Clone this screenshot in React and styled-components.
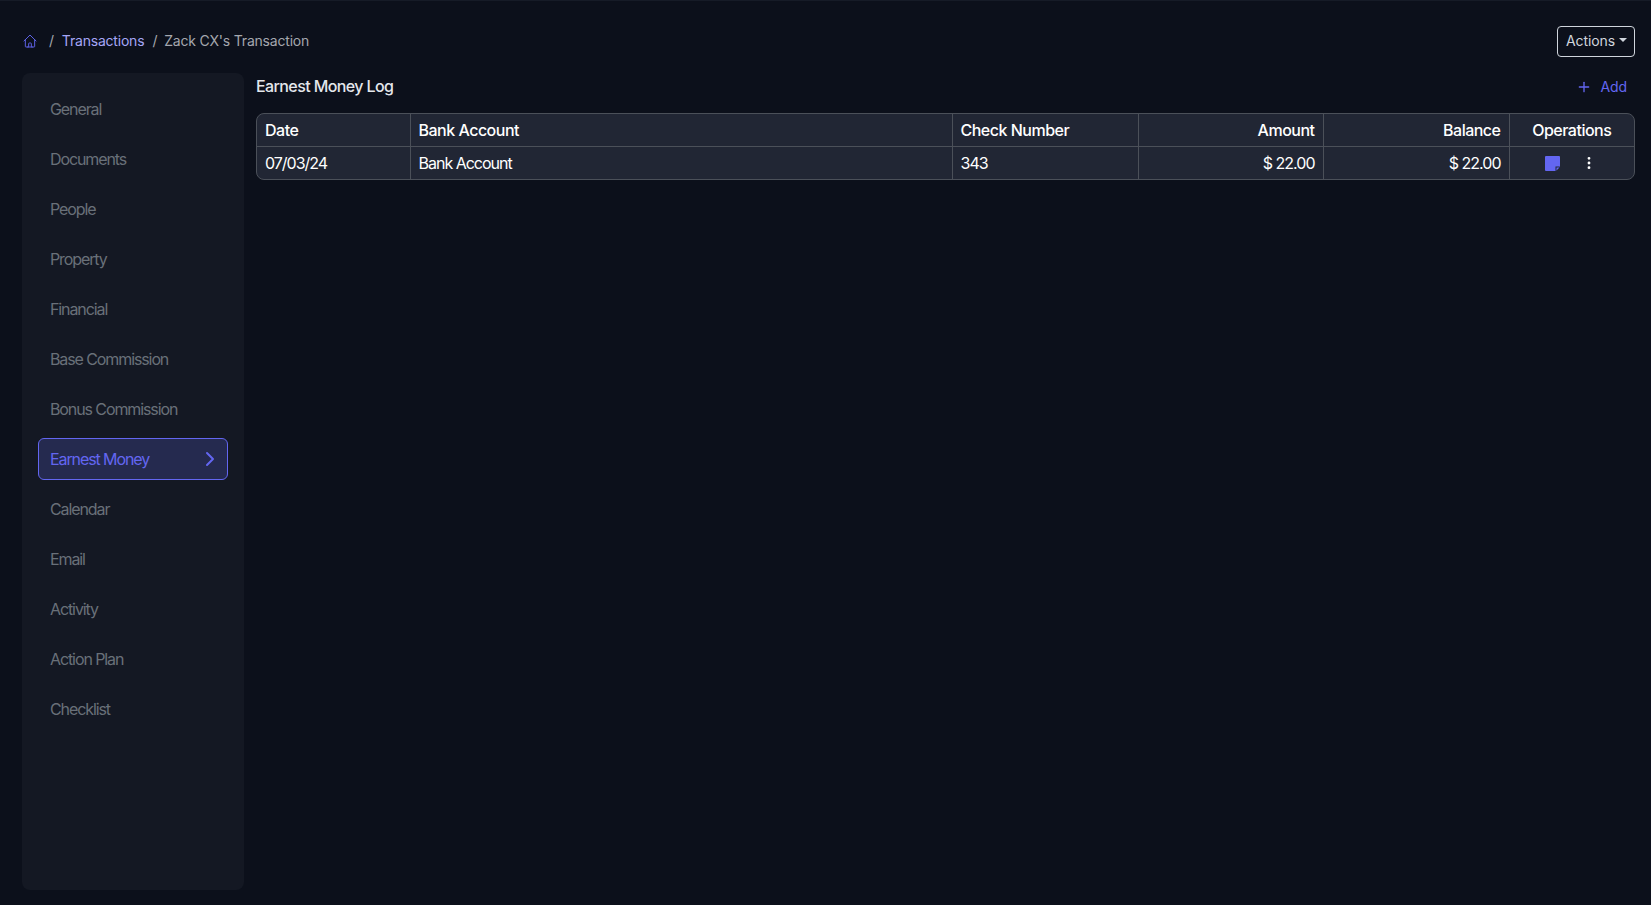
import React from "react";
import styled, { createGlobalStyle } from "styled-components";
import { ChevronRight, EllipsisVertical, Plus } from "lucide-react";
import { HiOutlineHome } from "react-icons/hi";

const GlobalStyle = createGlobalStyle`
  html, body {
    margin: 0;
    height: 100%;
    background: #0c101b;
    font-family: Inter, "Liberation Sans", sans-serif;
  }
  * {
    box-sizing: border-box;
  }
`;

const Page = styled.div`
  height: 905px;
  padding: 1px 16px 16px 22px;
  border-top: 1px solid #161b27;
  display: flex;
  flex-direction: column;
  overflow: hidden;
`;

const TopBar = styled.div`
  display: flex;
  align-items: center;
  justify-content: space-between;
  padding-top: 23px;
  height: 71px;
  padding-bottom: 16px;
`;

const Breadcrumb = styled.nav`
  display: flex;
  align-items: center;
  font-size: 14px;
  line-height: 20px;
  letter-spacing: -0.2px;
  color: #a4a7ae;
`;

const Crumb = styled.a`
  color: #a5a6f6;
  text-decoration: none;
`;

const Divider = styled.span`
  margin: 0 8px;
  color: #a4a7ae;
`;

const HomeLink = styled.a`
  display: flex;
  color: #6366f1;
  margin-right: 3px;
`;

const CurrentCrumb = styled.span`
  margin-left: -1px;
`;

const ActionsButton = styled.button`
  display: flex;
  align-items: center;
  height: 31px;
  width: 78px;
  padding: 0 8px;
  background: transparent;
  border: 1px solid #d0d5dd;
  border-radius: 4px;
  color: #d0d5dd;
  font: 400 14px/20px Inter, "Liberation Sans", sans-serif;
  letter-spacing: -0.1px;
`;

const Caret = styled.span`
  margin-left: 4px;
  margin-top: -2px;
  border-top: 4px solid #d0d5dd;
  border-left: 4px solid transparent;
  border-right: 4px solid transparent;
`;

const Body = styled.div`
  flex: 1;
  display: flex;
  gap: 12px;
  min-height: 0;
`;

const Sidebar = styled.aside`
  width: 222px;
  height: 817px;
  padding: 15px 16px;
  background: #141823;
  border-radius: 8px;
  display: flex;
  flex-direction: column;
  gap: 8px;
`;

const NavItem = styled.a`
  display: flex;
  align-items: center;
  justify-content: space-between;
  height: 42px;
  padding: 0 5px 0 11px;
  font-size: 16px;
  letter-spacing: -1.1px;
  border-radius: 6px;
  border: 1px solid ${(p) => (p.$active ? "#6366f1" : "transparent")};
  background: ${(p) => (p.$active ? "#252a4f" : "transparent")};
  color: ${(p) => (p.$active ? "#6366f1" : "#697079")};
`;

const Content = styled.main`
  flex: 1;
  min-width: 0;
`;

const LogHeader = styled.div`
  display: flex;
  align-items: center;
  justify-content: space-between;
  height: 28px;
  margin-bottom: 12px;
`;

const Title = styled.h2`
  margin: -2px 0 0;
  font-size: 16px;
  line-height: 28px;
  font-weight: 500;
  letter-spacing: -0.6px;
  color: #e4e7ec;
`;

const AddButton = styled.button`
  display: flex;
  align-items: center;
  gap: 8px;
  padding: 0 8px;
  background: none;
  border: none;
  color: #6366f1;
  font: 400 14px/20px Inter, "Liberation Sans", sans-serif;
  letter-spacing: -0.1px;
`;

const TableFrame = styled.div`
  width: 1379px;
  border: 1px solid #4b5059;
  border-radius: 8px;
  background: #212634;
  overflow: hidden;
`;

const Table = styled.table`
  width: 100%;
  table-layout: fixed;
  border-collapse: collapse;
  color: #fff;
  font-size: 16px;
  line-height: 24px;
`;

const HeadCell = styled.th`
  height: 32px;
  padding: 0 8px;
  font-weight: 500;
  letter-spacing: -0.5px;
  text-align: ${(p) => p.$align || "left"};
  border-left: 1px solid #4b5059;
  border-bottom: 1px solid #4b5059;
  &:first-child {
    border-left: none;
  }
`;

const Cell = styled.td`
  height: 33px;
  padding: 0 8px;
  font-weight: 400;
  letter-spacing: -1px;
  text-align: ${(p) => p.$align || "left"};
  border-left: 1px solid #4b5059;
  &:first-child {
    border-left: none;
  }
`;

const Operations = styled.div`
  display: flex;
  align-items: center;
  justify-content: center;
  gap: 21px;
  padding-right: 2px;
`;

const IconButton = styled.span`
  display: flex;
  color: #fff;
`;

const NoteSvg = styled.svg`
  margin-top: 1px;
`;

const navItems = [
  "General",
  "Documents",
  "People",
  "Property",
  "Financial",
  "Base Commission",
  "Bonus Commission",
  "Earnest Money",
  "Calendar",
  "Email",
  "Activity",
  "Action Plan",
  "Checklist",
];

const columns = [
  { label: "Date", width: 153 },
  { label: "Bank Account", width: 542 },
  { label: "Check Number", width: 186 },
  { label: "Amount", width: 185, align: "right" },
  { label: "Balance", width: 186, align: "right" },
  { label: "Operations", align: "center" },
];

const StickyNote = () => (
  <NoteSvg width="15" height="15" viewBox="0 0 15 15">
    <path d="M1 0h13a1 1 0 0 1 1 1v9.5L10.5 15H1a1 1 0 0 1-1-1V1a1 1 0 0 1 1-1z" fill="#6366f1" />
    <path d="M10.5 15v-4.5H15z" fill="#212634" />
    <path d="M11.5 14.4v-2.9h2.9z" fill="#6366f1" />
  </NoteSvg>
);

const App = () => (
  <>
    <GlobalStyle />
    <Page>
      <TopBar>
        <Breadcrumb>
          <HomeLink>
            <HiOutlineHome size={16} strokeWidth={1.4} />
          </HomeLink>
          <Divider>/</Divider>
          <Crumb>Transactions</Crumb>
          <Divider>/</Divider>
          <CurrentCrumb>Zack CX's Transaction</CurrentCrumb>
        </Breadcrumb>
        <ActionsButton>
          Actions
          <Caret />
        </ActionsButton>
      </TopBar>
      <Body>
        <Sidebar>
          {navItems.map((item) => (
            <NavItem key={item} $active={item === "Earnest Money"}>
              {item}
              {item === "Earnest Money" && <ChevronRight size={24} strokeWidth={2} />}
            </NavItem>
          ))}
        </Sidebar>
        <Content>
          <LogHeader>
            <Title>Earnest Money Log</Title>
            <AddButton>
              <Plus size={16} strokeWidth={2} />
              Add
            </AddButton>
          </LogHeader>
          <TableFrame>
            <Table>
              <colgroup>
                {columns.map((c) => (
                  <col key={c.label} style={c.width ? { width: c.width } : undefined} />
                ))}
              </colgroup>
              <thead>
                <tr>
                  {columns.map((c) => (
                    <HeadCell key={c.label} $align={c.align}>
                      {c.label}
                    </HeadCell>
                  ))}
                </tr>
              </thead>
              <tbody>
                <tr>
                  <Cell>07/03/24</Cell>
                  <Cell>Bank Account</Cell>
                  <Cell>343</Cell>
                  <Cell $align="right">$ 22.00</Cell>
                  <Cell $align="right">$ 22.00</Cell>
                  <Cell>
                    <Operations>
                      <IconButton>
                        <StickyNote />
                      </IconButton>
                      <IconButton>
                        <EllipsisVertical size={16} strokeWidth={2.25} />
                      </IconButton>
                    </Operations>
                  </Cell>
                </tr>
              </tbody>
            </Table>
          </TableFrame>
        </Content>
      </Body>
    </Page>
  </>
);

export default App;
